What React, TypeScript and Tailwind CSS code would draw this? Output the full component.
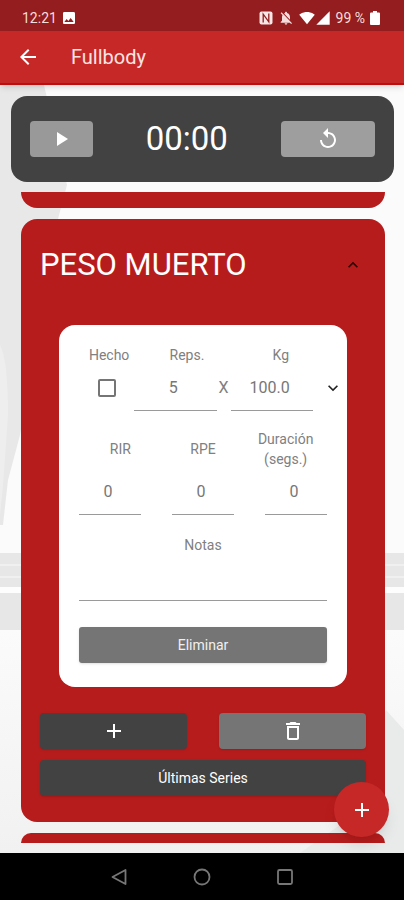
import React, { useState } from 'react';
import {
  MdAdd,
  MdArrowBack,
  MdDeleteOutline,
  MdImage,
  MdKeyboardArrowDown,
  MdKeyboardArrowUp,
  MdNotificationsOff,
  MdPlayArrow,
  MdReplay,
  MdSignalCellular4Bar,
  MdSignalWifi4Bar,
} from 'react-icons/md';

const fieldClass =
  'block h-[46px] rounded-none border-b border-[#9a9a9a] bg-transparent text-center text-base text-[#777777] outline-none';
const labelClass = 'text-center text-sm leading-5 text-[#808080]';

const StatusBar = () => (
  <div className="flex h-[31px] items-center justify-between bg-[#931d1f] pt-1 pr-6 pl-[22px] text-sm text-[#f6dcdc]">
    <div className="flex items-center gap-1">
      <span>12:21</span>
      <MdImage className="h-4 w-4 text-white" />
    </div>
    <div className="flex items-center gap-[5px]">
      <svg viewBox="0 0 14 14" className="h-[14px] w-[14px]" aria-hidden="true">
        <rect x="0.5" y="0.5" width="13" height="13" rx="2" fill="#f6e6e6" />
        <path d="M4.2 11.5V3.2L9.8 10.8V2.5" fill="none" stroke="#931d1f" strokeWidth="1.3" />
      </svg>
      <MdNotificationsOff className="h-4 w-4" />
      <div className="flex items-center">
        <MdSignalWifi4Bar className="h-4 w-4 text-white" />
        <MdSignalCellular4Bar className="h-4 w-4 text-white" />
      </div>
      <span>99 %</span>
      <svg viewBox="0 0 10 14" className="h-[14px] w-[10px]" aria-hidden="true">
        <path d="M3 0H7V1.5H9Q10 1.5 10 2.5V13Q10 14 9 14H1Q0 14 0 13V2.5Q0 1.5 1 1.5H3Z" fill="#ffffff" />
      </svg>
    </div>
  </div>
);

const Header = () => (
  <header className="relative z-10 flex h-[54px] items-center border-b-2 border-[#b9100f] bg-[#c62828] px-4 text-white shadow-md">
    <button type="button" aria-label="Atrás">
      <MdArrowBack className="h-6 w-6" />
    </button>
    <h1 className="ml-[31px] text-xl text-[#fbe3e3]">Fullbody</h1>
  </header>
);

// Faded gym photo behind the list
const Backdrop = () => (
  <svg
    className="absolute inset-0 h-full w-full"
    viewBox="0 0 404 768"
    preserveAspectRatio="none"
    aria-hidden="true"
  >
    <defs>
      <linearGradient id="floor" x1="0" y1="0" x2="0" y2="1">
        <stop offset="0" stopColor="#fbfbfb" />
        <stop offset="1" stopColor="#f1f1f2" />
      </linearGradient>
    </defs>
    <rect width="404" height="768" fill="#fbfbfb" />
    <path d="M0 0H44L67 100L58 134L40 240L20 350L8 395L3 440H0Z" fill="#e8e8e8" />
    <path d="M0 260Q8 275 8 330L3 400L0 430Z" fill="#eeeeee" />
    <rect y="468" width="404" height="34" fill="#e6e7e6" />
    <rect y="479" width="404" height="2" fill="#f0f0f0" />
    <rect y="491" width="404" height="2" fill="#f0f0f0" />
    <rect y="502" width="404" height="6" fill="#fdfdfd" />
    <rect y="508" width="404" height="37" fill="#e6e7e6" />
    <rect y="545" width="404" height="223" fill="url(#floor)" />
    <path d="M386 625L404 645V768H300L340 740Z" fill="#e9eaea" />
  </svg>
);

const Timer = () => (
  <section className="grid grid-cols-[2fr_6fr_3fr] items-center rounded-2xl bg-[#424242] px-[19px] py-[25px] text-white">
    <button
      type="button"
      aria-label="Iniciar"
      className="flex h-9 items-center justify-center rounded bg-[#999999]"
    >
      <MdPlayArrow className="h-6 w-6" />
    </button>
    <span className="text-center text-[33px] leading-9">00:00</span>
    <button
      type="button"
      aria-label="Reiniciar"
      className="flex h-9 items-center justify-center rounded bg-[#9e9e9e]"
    >
      <MdReplay className="h-6 w-6" />
    </button>
  </section>
);

const SetForm = () => {
  const [done, setDone] = useState(false);

  return (
    <form className="mx-[19px] mt-[42px] rounded-2xl bg-white pt-5 pb-6 pl-5">
      <div className="mr-5 grid grid-cols-[60fr_95fr_92fr]">
        <label htmlFor="done" className={labelClass}>Hecho</label>
        <label htmlFor="reps" className={labelClass}>Reps.</label>
        <label htmlFor="kg" className={labelClass}>Kg</label>
      </div>
      <div className="grid grid-cols-[55fr_82fr_14fr_82fr_34fr] items-center">
        <input
          id="done"
          type="checkbox"
          checked={done}
          onChange={(e) => setDone(e.target.checked)}
          className="h-[18px] w-[18px] appearance-none justify-self-center rounded-xs border-2 border-[#757575] checked:bg-[#757575]"
        />
        <input id="reps" type="text" defaultValue="5" className={`${fieldClass} w-full min-w-0 pr-1`} />
        <span className="text-center text-base text-[#808080]">X</span>
        <input id="kg" type="text" defaultValue="100.0" className={`${fieldClass} w-full min-w-0 pr-1`} />
        <button type="button" aria-label="Más opciones" className="justify-self-end pr-1 text-[#222222]">
          <MdKeyboardArrowDown className="h-5 w-5" />
        </button>
      </div>

      <div className="mr-5">
        <div className="mt-[18px] grid grid-cols-3 items-center">
          <label htmlFor="rir" className={labelClass}>RIR</label>
          <label htmlFor="rpe" className={labelClass}>RPE</label>
          <label htmlFor="duration" className={labelClass}>
            Duración
            <br />
            (segs.)
          </label>
        </div>
        <div className="flex justify-between">
          <input id="rir" type="text" defaultValue="0" className={`${fieldClass} w-1/4 pr-1`} />
          <input id="rpe" type="text" defaultValue="0" className={`${fieldClass} w-1/4 pr-1`} />
          <input id="duration" type="text" defaultValue="0" className={`${fieldClass} w-1/4 pr-1`} />
        </div>

        <label htmlFor="notes" className={`${labelClass} mt-5 block`}>Notas</label>
        <textarea id="notes" className={`${fieldClass} w-full resize-none`} />

        <button
          type="button"
          className="mt-[26px] h-9 w-full rounded-[3px] bg-[#757575] text-sm text-[#f0f0f0] shadow"
        >
          Eliminar
        </button>
      </div>
    </form>
  );
};

const ExerciseCard = () => (
  <section className="rounded-2xl bg-[#b71c1c] px-[19px] pt-7 pb-[26px]">
    <div className="flex items-center justify-between">
      <h2 className="text-[31px] leading-9 text-white">PESO MUERTO</h2>
      <button type="button" aria-label="Contraer" className="pr-[3px] text-[#2b0505]">
        <MdKeyboardArrowUp className="h-5 w-5" />
      </button>
    </div>
    <SetForm />
    <div className="mt-[26px] grid grid-cols-2 gap-8">
      <button
        type="button"
        aria-label="Añadir serie"
        className="flex h-9 items-center justify-center rounded bg-[#424242] text-white shadow"
      >
        <MdAdd className="h-6 w-6" />
      </button>
      <button
        type="button"
        aria-label="Borrar ejercicio"
        className="flex h-9 items-center justify-center rounded bg-[#757575] text-white shadow"
      >
        <MdDeleteOutline className="h-6 w-6" />
      </button>
    </div>
    <button type="button" className="mt-[11px] h-9 w-full rounded bg-[#424242] text-sm text-white shadow">
      Últimas Series
    </button>
  </section>
);

const NavigationBar = () => (
  <nav className="flex h-[47px] items-center justify-center gap-[65px] bg-black text-[#777777]">
    <button type="button" aria-label="Volver">
      <svg viewBox="0 0 18 18" className="h-[18px] w-[18px]" fill="none" stroke="currentColor" strokeWidth="1.8">
        <path d="M15.5 2V16L2.5 9Z" strokeLinejoin="round" />
      </svg>
    </button>
    <button type="button" aria-label="Inicio">
      <svg viewBox="0 0 18 18" className="h-[18px] w-[18px]" fill="none" stroke="currentColor" strokeWidth="1.8">
        <circle cx="9" cy="9" r="7.5" />
      </svg>
    </button>
    <button type="button" aria-label="Recientes">
      <svg viewBox="0 0 18 18" className="h-[18px] w-[18px]" fill="none" stroke="currentColor" strokeWidth="1.8">
        <rect x="2" y="2" width="14" height="14" rx="1.5" />
      </svg>
    </button>
  </nav>
);

const App = () => {
  return (
    <div className="flex min-h-screen flex-col font-[Roboto,sans-serif]">
      <StatusBar />
      <Header />
      <main className="relative flex-1">
        <Backdrop />
        <div className="relative pt-[11px] pr-[10px] pb-[10px] pl-[11px]">
          <Timer />
          <div className="mt-[10px] flex flex-col gap-[11px] pr-[9px] pl-[10px]">
            <div className="h-4 rounded-b-2xl bg-[#b71c1c]" />
            <ExerciseCard />
            <div className="h-[10px] rounded-t-2xl bg-[#b71c1c]" />
          </div>
        </div>
        <button
          type="button"
          aria-label="Añadir ejercicio"
          className="absolute right-[15px] bottom-4 flex h-[55px] w-[55px] items-center justify-center rounded-full bg-[#c62828] text-white shadow-lg"
        >
          <MdAdd className="h-6 w-6" />
        </button>
      </main>
      <NavigationBar />
    </div>
  );
};

export default App;
